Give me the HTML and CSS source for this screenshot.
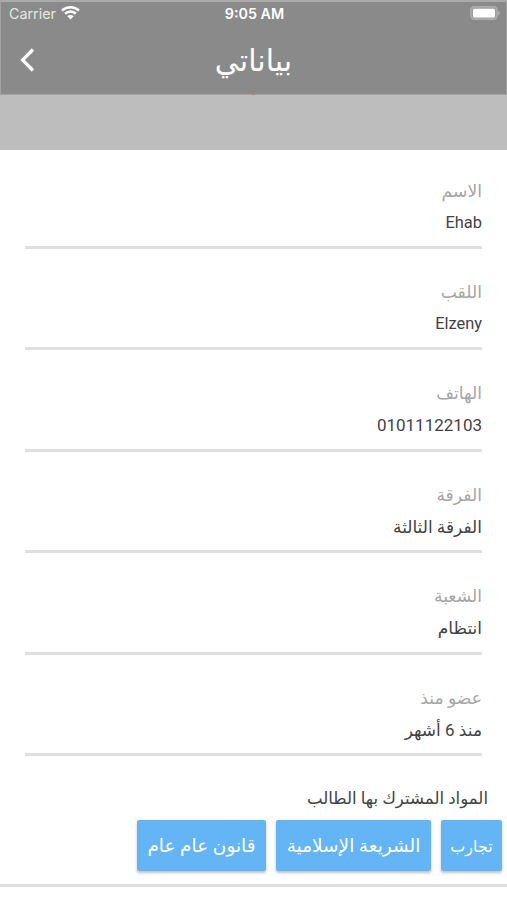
FILE: index.html
```html
<!DOCTYPE html>
<html lang="ar" dir="rtl">
<head>
    <meta charset="UTF-8">
    <meta name="viewport" content="width=device-width, initial-scale=1.0">
    <title>بياناتي</title>
    <link rel="stylesheet" href="styles.css">
</head>
<body>
    <header class="header">
        <div class="status-bar" dir="ltr">
            <div class="carrier">
                <span>Carrier</span>
                <svg class="wifi" viewBox="0 0 18 14" width="19" height="15">
                    <path d="M1 5.2a11.5 11.5 0 0 1 16 0M3.9 8.2a7.3 7.3 0 0 1 10.2 0" fill="none" stroke="#fff" stroke-width="2.4"/>
                    <path d="M9 13.6 6 10.5a4.3 4.3 0 0 1 6 0z" fill="#fff"/>
                </svg>
            </div>
            <span class="time">9:05 AM</span>
            <svg class="battery" viewBox="0 0 30 14" width="30" height="14">
                <rect x=".8" y=".8" width="26.4" height="12.4" rx="3.5" fill="#a0a0a0" stroke="#adadad" stroke-width="1.4"/>
                <rect x="3" y="2.7" width="22" height="8.8" rx="1.5" fill="#fff"/>
                <path d="M28.3 4.7c2 .8 2 3.8 0 4.6z" fill="#b0b0b0"/>
            </svg>
        </div>
        <div class="nav-bar" dir="ltr">
            <svg class="back" viewBox="0 0 16 26" width="16" height="26">
                <path d="M14 2.5 3.6 13 14 23.5" fill="none" stroke="#fff" stroke-width="3.2"/>
            </svg>
            <h1 class="title">بياناتي</h1>
        </div>
        <span class="marker"></span>
    </header>
    <div class="banner"></div>

    <main class="fields">
        <div class="field">
            <div class="label">الاسم</div>
            <div class="value latin">Ehab</div>
        </div>
        <div class="field">
            <div class="label">اللقب</div>
            <div class="value latin">Elzeny</div>
        </div>
        <div class="field">
            <div class="label">الهاتف</div>
            <div class="value">01011122103</div>
        </div>
        <div class="field">
            <div class="label">الفرقة</div>
            <div class="value">الفرقة الثالثة</div>
        </div>
        <div class="field">
            <div class="label">الشعبة</div>
            <div class="value">انتظام</div>
        </div>
        <div class="field">
            <div class="label">عضو منذ</div>
            <div class="value">منذ 6 أشهر</div>
        </div>
    </main>

    <section class="subjects">
        <h2 class="subjects-title">المواد المشترك بها الطالب</h2>
        <div class="chips">
            <div class="chip chip-small">تجارب</div>
            <div class="chip chip-large">الشريعة الإسلامية</div>
            <div class="chip chip-medium">قانون عام عام</div>
        </div>
    </section>
</body>
</html>
```
FILE: styles.css
```css
* {
    box-sizing: border-box;
}

body {
    margin: 0;
    height: 900px;
    overflow: hidden;
    background: #fff;
    color: #424242;
    font-family: Roboto, "DejaVu Sans", sans-serif;
}

.header {
    position: relative;
    height: 95px;
    background: #8a8a8a;
    border: 1px solid #a3a3a3;
    border-top: 2px solid #aaa;
}

.status-bar {
    display: grid;
    grid-template-columns: 1fr auto 1fr;
    align-items: center;
    height: 23px;
    padding: 0 6px 0 8px;
    color: #fff;
    font-family: Inter, sans-serif;
    font-size: 14.3px;
}

.carrier {
    display: flex;
    align-items: center;
    gap: 5px;
    color: #e6e6e6;
}

.wifi {
    margin-bottom: 2px;
}

.time {
    font-weight: 600;
    font-size: 14.3px;
}

.battery {
    justify-self: end;
    margin-bottom: 1px;
}

.nav-bar {
    display: grid;
    grid-template-columns: 80px 1fr 80px;
    align-items: center;
    height: 69px;
}

.back {
    margin-left: 18px;
}

.title {
    margin: 0;
    padding-top: 2px;
    color: #fff;
    font-size: 30px;
    font-weight: 400;
    line-height: 50px;
    text-align: center;
}

/* tip of the indicator under the title */
.marker {
    position: absolute;
    left: 251px;
    bottom: -1px;
    width: 3px;
    height: 2px;
    background: #c8842e;
}

.banner {
    height: 55px;
    background: #bdbdbd;
}

.fields {
    padding: 0 25px;
}

.field {
    height: 101.4px;
    padding-top: 27px;
    border-bottom: 3px solid #e0e0e0;
}

.field:first-child {
    height: 99px;
    padding-top: 24.5px;
}

.label,
.value {
    height: 32px;
    font-size: 17px;
    line-height: 32px;
}

.label {
    color: #a6a6a6;
    font-size: 17.2px;
}

.latin {
    font-size: 16.4px;
}

.subjects {
    height: 131px;
    padding: 27px 5px 0;
    border-bottom: 3px solid #e0e0e0;
}

.subjects-title {
    margin: 0 14px 5px;
    height: 32px;
    font-size: 16.6px;
    font-weight: 400;
    line-height: 32px;
}

.chips {
    display: flex;
    gap: 10px;
}

.chip {
    display: flex;
    align-items: center;
    justify-content: center;
    height: 51px;
    padding-top: 2px;
    border-radius: 2px;
    background: #64b5f6;
    box-shadow: 0 2px 3px rgba(0, 0, 0, 0.25);
    color: #fff;
    font-size: 18.5px;
    white-space: nowrap;
}

.chip-small {
    width: 61px;
    font-size: 16px;
}

.chip-large {
    width: 155px;
}

.chip-medium {
    width: 129px;
}
```
